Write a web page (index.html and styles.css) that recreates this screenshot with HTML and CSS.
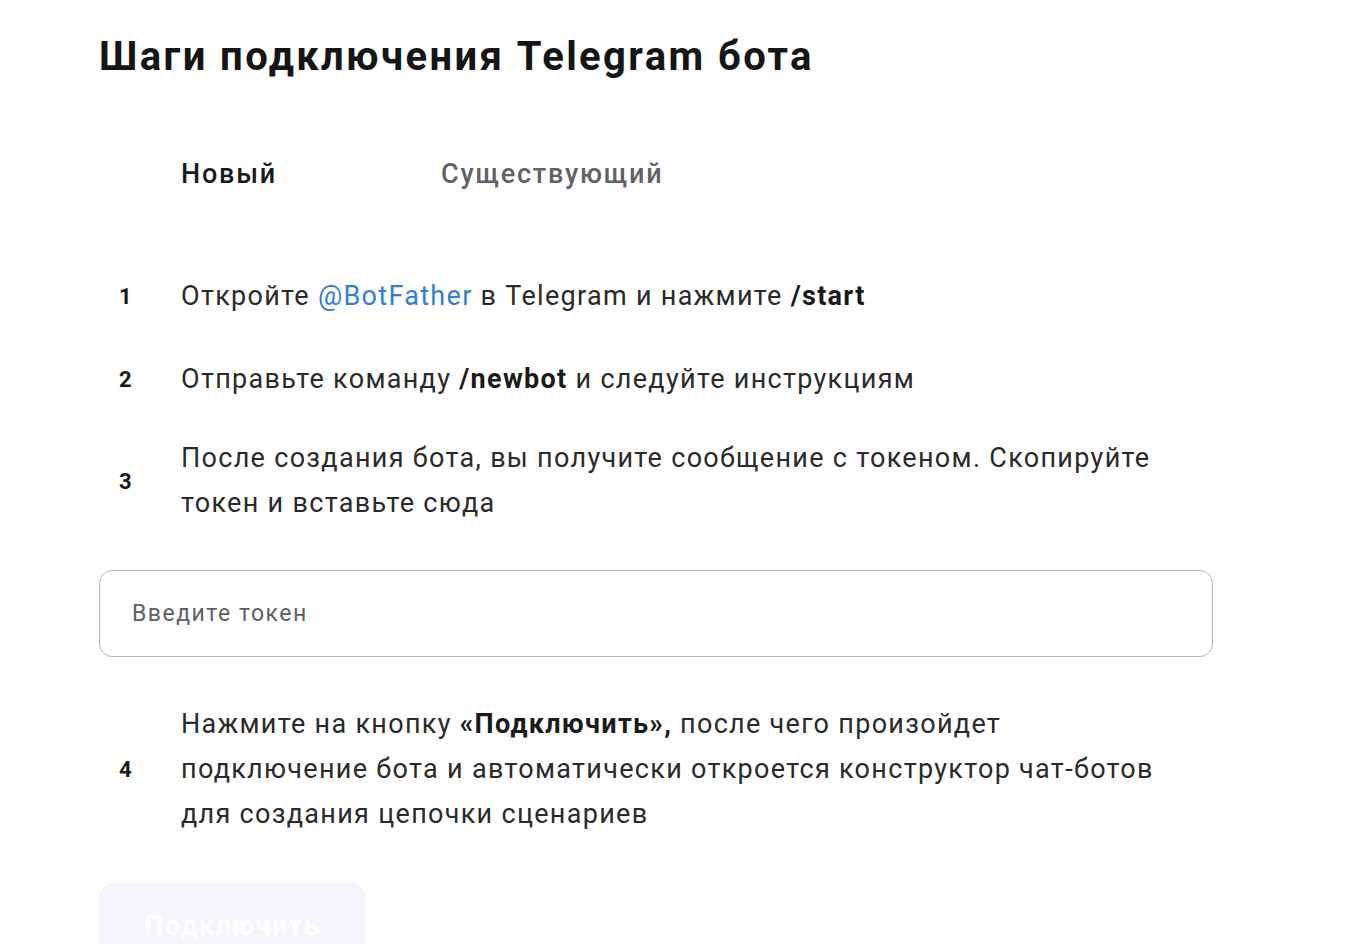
FILE: index.html
```html
<!DOCTYPE html>
<html lang="ru">

<head>
    <meta charset="UTF-8">
    <meta name="viewport" content="width=device-width, initial-scale=1.0">
    <title>Подключение Telegram бота</title>
    <link rel="stylesheet" href="styles.css">
</head>

<body>
    <div class="container">
        <h1 class="titulo">Шаги подключения Telegram бота</h1>

        <div class="tabs">
            <div class="tab activo">Новый</div>
            <div class="tab">Существующий</div>
        </div>

        <div class="pasos">
            <div class="paso">
                <div class="numero">1</div>
                <div class="texto">Откройте <a href="#" class="enlace">@BotFather</a> в Telegram и нажмите <b>/start</b></div>
            </div>
            <div class="paso">
                <div class="numero">2</div>
                <div class="texto">Отправьте команду <b>/newbot</b> и следуйте инструкциям</div>
            </div>
            <div class="paso">
                <div class="numero">3</div>
                <div class="texto">После создания бота, вы получите сообщение с токеном. Скопируйте токен и вставьте сюда</div>
            </div>
        </div>

        <input class="token" type="text" placeholder="Введите токен">

        <div class="paso paso-final">
            <div class="numero">4</div>
            <div class="texto">Нажмите на кнопку <b>«Подключить»,</b> после чего произойдет подключение бота и автоматически откроется конструктор чат-ботов для создания цепочки сценариев</div>
        </div>

        <button class="boton" disabled>Подключить</button>
    </div>
</body>

</html>
```

FILE: styles.css
```css
body {
    margin: 0;
    padding: 0;
    font-family: Roboto, "Liberation Sans", Arial, sans-serif;
    color: #1f1f1f;
    background: #fff;
}

.container {
    width: 1114px;
    padding: 30px 0 0 99px;
}

.titulo {
    margin: 0;
    font-size: 40px;
    line-height: 54px;
    font-weight: 700;
    letter-spacing: 2.4px;
    color: #151515;
}

.tabs {
    display: flex;
    margin-top: 72px;
    padding-left: 82px;
}

.tab {
    width: 260px;
    font-size: 27px;
    line-height: 36px;
    font-weight: 500;
    letter-spacing: 1.8px;
    color: #5f6266;
}

.tab.activo {
    color: #1a1a1a;
}

.pasos {
    margin-top: 78px;
    display: flex;
    flex-direction: column;
    gap: 30px;
}

.paso {
    display: flex;
    align-items: center;
    min-height: 53px;
}

.numero {
    width: 82px;
    padding-left: 20px;
    box-sizing: border-box;
    font-size: 22px;
    font-weight: 700;
    color: #1a1a1a;
}

.texto {
    max-width: 990px;
    font-size: 27px;
    line-height: 45px;
    letter-spacing: 1.3px;
    color: #2a2a2a;
}

.texto b {
    font-weight: 700;
    color: #1a1a1a;
}

.enlace {
    color: #2f7fd6;
    text-decoration: none;
}

.token {
    display: block;
    width: 100%;
    height: 87px;
    margin-top: 44px;
    padding: 0 32px;
    box-sizing: border-box;
    border: 1.5px solid #b5b5ba;
    border-radius: 13px;
    font-family: Roboto, "Liberation Sans", Arial, sans-serif;
    font-size: 23px;
    letter-spacing: 1.5px;
    outline: none;
}

.token::placeholder {
    color: #5d6066;
}

.paso-final {
    margin-top: 45px;
}

.boton {
    display: block;
    margin-top: 45px;
    width: 267px;
    height: 88px;
    border: none;
    border-radius: 16px;
    background: #f5f6fb;
    color: #ffffff;
    font-family: Roboto, "Liberation Sans", Arial, sans-serif;
    font-size: 27px;
    font-weight: 700;
    letter-spacing: 1.4px;
}
```
